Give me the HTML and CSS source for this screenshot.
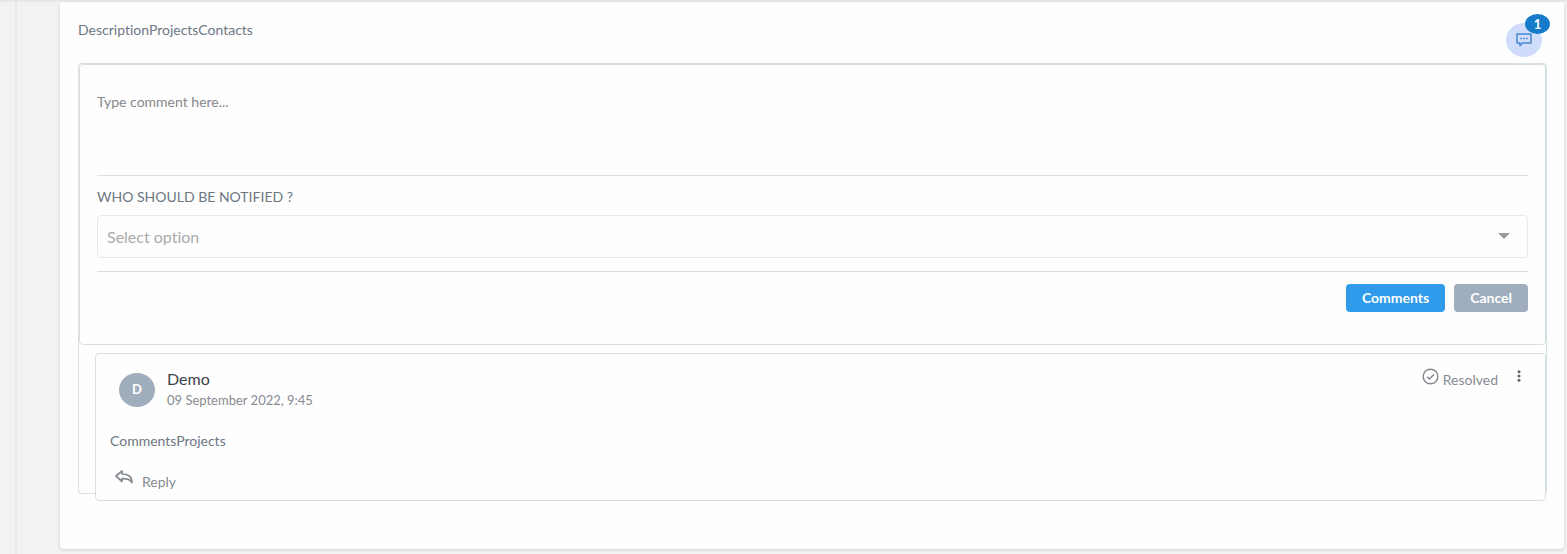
FILE: index.html
```
<!doctype html>
<html lang="en">
 <head>
  <meta charset="UTF-8">
  <meta name="viewport" content="width=device-width, initial-scale=1">
  <title>Comments</title>
  <link rel="stylesheet" href="styles.css">
 </head>
 <body>
 <div class="page">
  <div class="rail"></div>
  <main class="panel">
	<div class="p_header">
		<p class="desc">DescriptionProjectsContacts</p>
		<button type="button" class="chat" aria-label="Comments, 1 new">
			<svg width="16" height="14" viewBox="0 0 16 14" fill="none" stroke="#4a86cf" stroke-width="1.5">
				<path d="M1 1H15V10H6.5L4 12.7V10H1Z" stroke-linejoin="round"/>
				<path d="M4.3 5.5H6M7.2 5.5H8.8M10 5.5H11.7"/>
			</svg>
			<span class="badge">1</span>
		</button>
	</div>
	<div class="thread">
		<!-- new comment -->
		<form class="form">
			<textarea class="text" placeholder="Type comment here..." aria-label="Comment"></textarea>
			<label class="label" for="notify">WHO SHOULD BE NOTIFIED ?</label>
			<div class="select_box">
				<select class="select" id="notify">
					<option>Select option</option>
				</select>
				<svg class="caret" width="12" height="6" viewBox="0 0 12 6"><path d="M0 0H12L6 6Z" fill="#999"/></svg>
			</div>
			<div class="actions">
				<button type="button" class="btn btn_blue">Comments</button>
				<button type="button" class="btn btn_gray">Cancel</button>
			</div>
		</form>
		<!-- posted comment -->
		<article class="comment">
			<div class="c_header">
				<span class="avatar">D</span>
				<div class="who">
					<h2 class="name">Demo</h2>
					<time class="date" datetime="2022-09-09T09:45">09 September 2022, 9:45</time>
				</div>
				<button type="button" class="link resolved">
					<svg width="17" height="17" viewBox="0 0 17 17" fill="none" stroke="#868b91" stroke-width="1.5">
						<circle cx="8.5" cy="8.5" r="7.3"/>
						<path d="M5 8.7L7.4 11L12 6.4"/>
					</svg>
					<span>Resolved</span>
				</button>
				<button type="button" class="link more" aria-label="More">
					<svg width="4" height="12" viewBox="0 0 4 12" fill="#62676c">
						<circle cx="2" cy="1.7" r="1.5"/><circle cx="2" cy="6" r="1.5"/><circle cx="2" cy="10.3" r="1.5"/>
					</svg>
				</button>
			</div>
			<p class="c_text">CommentsProjects</p>
			<button type="button" class="link reply">
				<svg width="18" height="14" viewBox="0 0 18 14" fill="none" stroke="#868b91" stroke-width="1.7" stroke-linejoin="round">
					<path d="M1 6L7 1V4C13 4 17 6.5 17 12.5C15 9.4 12 8.5 7 8.7V11.5Z"/>
				</svg>
				<span>Reply</span>
			</button>
		</article>
	</div>
  </main>
 </div>
 </body>
</html>
```
FILE: styles.css
```
*{padding:0;margin:0;box-sizing:border-box;}
body{background:#f2f2f2;font-family:Lato,"Liberation Sans",sans-serif;font-size:14px;line-height:16px;color:#6c7782;font-variant-ligatures:none;}
button,select,textarea{font:inherit;font-variant-ligatures:none;color:inherit;border:0;background:none;}
button{cursor:pointer;}
svg{display:block;flex:none;}
.page{display:flex;border-top:2px solid #e6e6e6;padding:0 3px 5px 0;min-height:100vh;}
.rail{width:17px;flex:none;margin:0 43px -5px 0;border-right:2px solid #e8e8e8;}
.panel{flex:1;min-width:0;background:#fefefe;padding:12px 17px 48px 18px;border-radius:0 0 4px 4px;box-shadow:0 1px 3px #ccd0d0;}
.p_header{display:flex;justify-content:space-between;align-items:flex-start;height:49px;}
.desc{padding-top:8px;}
.chat{position:relative;display:flex;align-items:center;justify-content:center;width:36px;height:34px;margin:9px 5px 0 0;border-radius:50%;background:#cfdcfa;}
.badge{position:absolute;top:-9px;right:-8px;width:25px;height:20px;border-radius:50%;background:#167bc9;color:#fff;font-size:13px;line-height:20px;font-weight:700;}
.thread{border:1px solid #dcdfe1;border-right-color:#cddfe7;border-radius:4px;}
.form{display:flex;flex-direction:column;padding:16px 17px 32px;border:1px solid #dcdfe1;border-radius:4px;}
.text{width:100%;height:95px;padding:13px 0;resize:none;outline:0;border-bottom:1px solid #dedfe0;}
.text::placeholder{color:#85888b;opacity:1;}
.label{padding:13px 0 10px;}
.select_box{position:relative;padding-bottom:13px;border-bottom:1px solid #dadcdd;}
.select{display:block;width:100%;height:43px;padding:0 9px;appearance:none;border:1px solid #ece8ea;border-radius:4px;font-size:16px;color:#aaa;}
.caret{position:absolute;top:18px;right:18px;pointer-events:none;}
.actions{display:flex;justify-content:flex-end;gap:9px;padding-top:12px;}
.btn{height:28px;padding:0 16px;border-radius:4px;color:#fff;font-weight:700;}
.btn_blue{background:#2f9bea;}
.btn_gray{background:#a0adbe;}
.comment{margin:8px 0 -8px 16px;padding:14px 14px 10px;background:#fefefe;border:1px solid #dcdfe1;border-radius:4px;}
.c_header{display:flex;align-items:flex-start;}
.avatar{width:36px;height:34px;margin:5px 12px 0 9px;border-radius:50%;background:#a0adbc;color:#fff;font-size:13px;font-weight:700;text-align:center;line-height:32px;}
.who{flex:1;}
.name{font-size:16px;line-height:22px;font-weight:400;color:#3c4147;}
.date{display:block;font-size:13px;line-height:20px;color:#868b91;}
.link{display:flex;align-items:flex-end;color:#868b91;}
.resolved{gap:4px;}
.resolved svg{margin-bottom:3px;}
.more{margin:2px 10px 0 19px;}
.c_text{padding:23px 0 21px;}
.reply{gap:9px;margin-left:5px;}
.reply svg{margin-bottom:6px;}
```
